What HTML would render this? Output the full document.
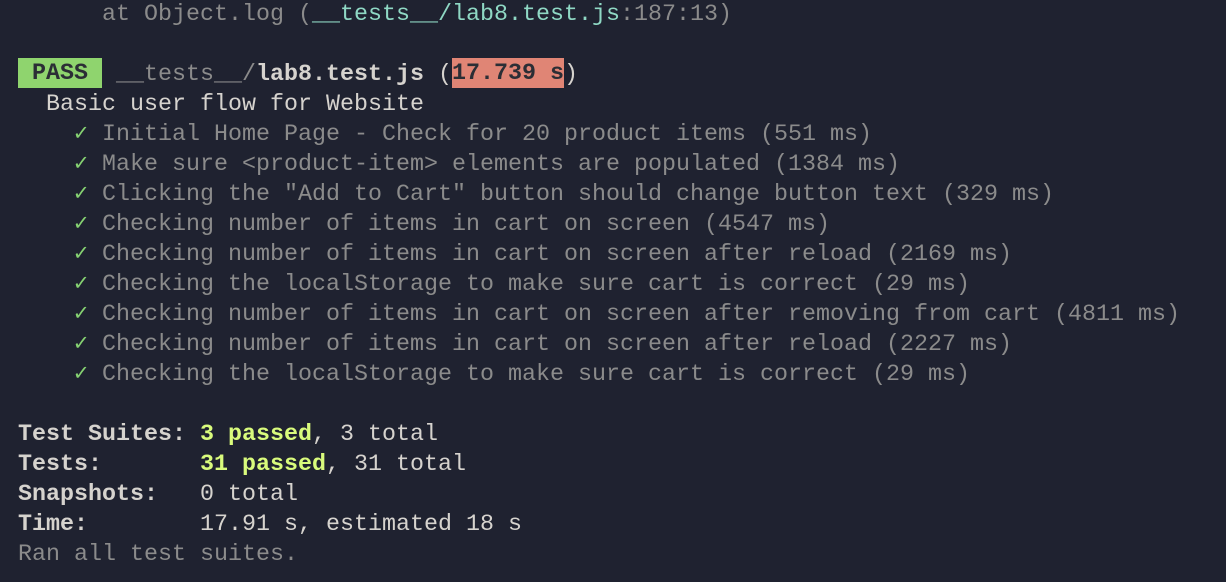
<!DOCTYPE html>
<html><head><meta charset="utf-8"><style>
html,body{margin:0;padding:0;background:#1f2230;width:1226px;height:582px;overflow:hidden}
pre{margin:0;position:absolute;left:18px;top:0px;font-family:"Liberation Mono","DejaVu Sans Mono",monospace;font-size:23.33px;line-height:30px;color:#d6d3ce}
.d{color:#8b8b8b}.t{color:#8fd8c4}.b{font-weight:bold}
.pass{background:#8fd46e;color:#2b2e35;font-weight:bold;display:inline-block;height:30px;vertical-align:top;margin-top:-2px;line-height:32px}
.red{background:#e08575;color:#2b2e35;display:inline-block;height:30px;vertical-align:top;margin-top:-2px;line-height:32px}
.y{color:#d9fb7c;font-weight:bold}.c{color:#86d272}
</style></head><body>
<pre><span class="d">      at Object.log (<span class="t">__tests__/lab8.test.js</span>:187:13)</span>

<span class="pass"> PASS </span> <span class="d">__tests__/</span><span class="b">lab8.test.js</span> (<span class="red b">17.739 s</span>)
  Basic user flow for Website
    <span class="c">✓</span> <span class="d">Initial Home Page - Check for 20 product items (551 ms)</span>
    <span class="c">✓</span> <span class="d">Make sure &lt;product-item&gt; elements are populated (1384 ms)</span>
    <span class="c">✓</span> <span class="d">Clicking the "Add to Cart" button should change button text (329 ms)</span>
    <span class="c">✓</span> <span class="d">Checking number of items in cart on screen (4547 ms)</span>
    <span class="c">✓</span> <span class="d">Checking number of items in cart on screen after reload (2169 ms)</span>
    <span class="c">✓</span> <span class="d">Checking the localStorage to make sure cart is correct (29 ms)</span>
    <span class="c">✓</span> <span class="d">Checking number of items in cart on screen after removing from cart (4811 ms)</span>
    <span class="c">✓</span> <span class="d">Checking number of items in cart on screen after reload (2227 ms)</span>
    <span class="c">✓</span> <span class="d">Checking the localStorage to make sure cart is correct (29 ms)</span>

<span class="b">Test Suites: </span><span class="y">3 passed</span>, 3 total
<span class="b">Tests:       </span><span class="y">31 passed</span>, 31 total
<span class="b">Snapshots:   </span>0 total
<span class="b">Time:        </span>17.91 s, estimated 18 s
<span class="d">Ran all test suites.</span></pre>
</body></html>
